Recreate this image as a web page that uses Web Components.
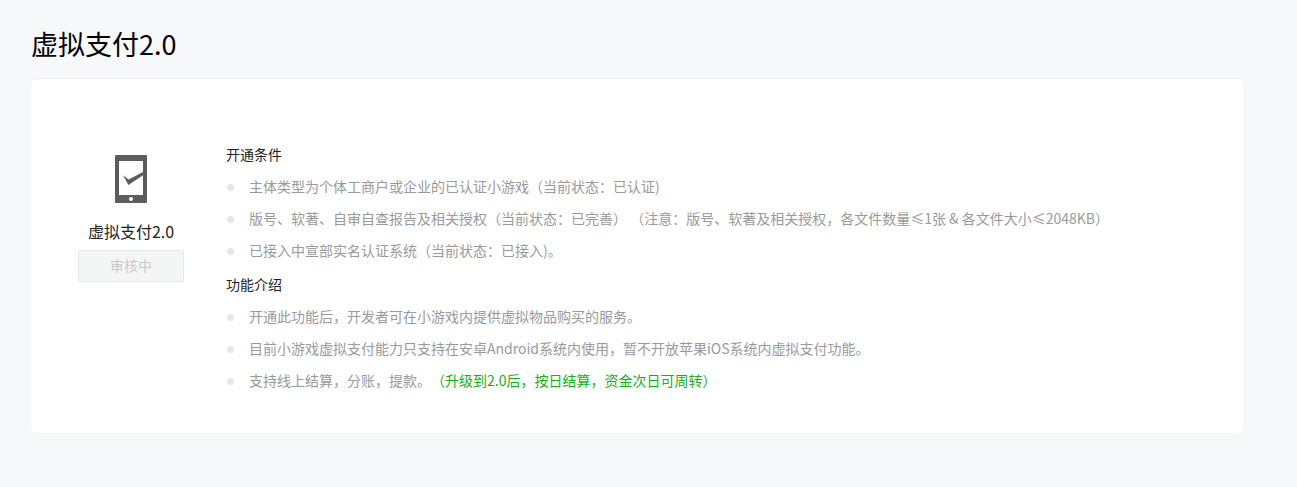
<!DOCTYPE html>
<html lang="zh-CN">
<head>
<meta charset="utf-8">
<title>虚拟支付2.0</title>
<style>
  body {
    margin: 0;
    background: #f6f8fa;
    color: #222;
    font: 14px/22px "Noto Sans CJK SC", sans-serif;
    text-spacing-trim: space-all;
  }
</style>
</head>
<body>

<pay-page heading="虚拟支付2.0">
  <pay-status slot="status" name="虚拟支付2.0" state="审核中"></pay-status>
  <pay-section heading="开通条件">
    <pay-item>主体类型为个体工商户或企业的已认证小游戏（当前状态：已认证)</pay-item>
    <pay-item>版号、软著、自审自查报告及相关授权（当前状态：已完善） （注意：版号、软著及相关授权，各文件数量≤1张 &amp; 各文件大小≤2048KB）</pay-item>
    <pay-item>已接入中宣部实名认证系统（当前状态：已接入)。</pay-item>
  </pay-section>
  <pay-section heading="功能介绍">
    <pay-item>开通此功能后，开发者可在小游戏内提供虚拟物品购买的服务。</pay-item>
    <pay-item>目前小游戏虚拟支付能力只支持在安卓Android系统内使用，暂不开放苹果iOS系统内虚拟支付功能。</pay-item>
    <pay-item>支持线上结算，分账，提款。<span slot="note">（升级到2.0后，按日结算，资金次日可周转）</span></pay-item>
  </pay-section>
</pay-page>

<script>
(function(){

// page title + the white card, status on the left and sections on the right
class PayPage extends HTMLElement {
  constructor() {
    super()
    this.attachShadow({mode:'open'})
    this.shadowRoot.innerHTML = `
      <style>
        :host {
          display: block;
          padding: 24px 54px 54px 31px;
        }

        h1 {
          margin: 0 0 14px;
          color: #000;
          font-size: 27px;
          line-height: 40px;
          font-weight: 400;
        }

        .card {
          display: flex;
          align-items: flex-start;
          gap: 42px;
          padding: 64px 47px 42px;
          background: #fff;
          border-top: 1px solid #eceef0;
          border-radius: 6px;
        }

        .sections {
          flex: 1;
          min-width: 0;
          display: flex;
          flex-direction: column;
          gap: 12px;
        }
      </style>
      <h1></h1>
      <div class="card">
        <slot name="status"></slot>
        <div class="sections"><slot></slot></div>
      </div>
    `
    this.shadowRoot.querySelector('h1').textContent = this.getAttribute('heading')
  }
}

// phone icon, product name and the (disabled) state button
class PayStatus extends HTMLElement {
  constructor() {
    super()
    this.attachShadow({mode:'open'})
    this.shadowRoot.innerHTML = `
      <style>
        :host {
          display: flex;
          flex-direction: column;
          align-items: center;
          flex: none;
          padding-top: 12px;
        }

        svg {
          display: block;
          width: 32px;
          height: 48px;
        }

        .name {
          margin: 16px 0 7px;
          font-size: 16px;
          line-height: 24px;
        }

        button {
          width: 106px;
          height: 32px;
          padding: 0 0 2px;
          border: 1px solid #e4e8eb;
          border-radius: 3px;
          background: #f4f6f6;
          color: #c9c9c9;
          font: inherit;
        }
      </style>
      <svg viewBox="0 0 32 48" aria-hidden="true">
        <rect width="32" height="48" rx="1" fill="#5c5c5c"/>
        <path fill="#fff" d="M4 6h24v34H4z"/>
        <circle cx="16" cy="44" r="2" fill="#fff"/>
        <path fill="#5c5c5c" d="M8 20.2l5.6 4.3L28 17v3.2L13.4 30z"/>
      </svg>
      <div class="name"></div>
      <button type="button" disabled></button>
    `
    this.shadowRoot.querySelector('.name').textContent = this.getAttribute('name')
    this.shadowRoot.querySelector('button').textContent = this.getAttribute('state')
  }
}

class PaySection extends HTMLElement {
  constructor() {
    super()
    this.attachShadow({mode:'open'})
    this.shadowRoot.innerHTML = `
      <style>
        :host { display: block; }

        h2 {
          margin: 0;
          font-size: 14px;
          line-height: 22px;
          font-weight: 400;
        }

        .items {
          display: flex;
          flex-direction: column;
          gap: 10px;
          margin-top: 10px;
        }
      </style>
      <h2></h2>
      <div class="items" role="list"><slot></slot></div>
    `
    this.shadowRoot.querySelector('h2').textContent = this.getAttribute('heading')
  }
}

// one bullet row, the note slot is the green part
class PayItem extends HTMLElement {
  constructor() {
    super()
    this.attachShadow({mode:'open'})
    this.shadowRoot.innerHTML = `
      <style>
        :host {
          display: flex;
          gap: 15px;
          padding-left: 1px;
          color: #9a9a9a;
        }

        .dot {
          flex: none;
          width: 7px;
          height: 7px;
          margin-top: 9px;
          border-radius: 50%;
          background: #e7e7eb;
        }

        ::slotted([slot="note"]) { color: #1aad19; }
      </style>
      <span class="dot"></span>
      <div><slot></slot><slot name="note"></slot></div>
    `
  }

  connectedCallback() {
    this.setAttribute('role', 'listitem')
  }
}

customElements.define('pay-page', PayPage)
customElements.define('pay-status', PayStatus)
customElements.define('pay-section', PaySection)
customElements.define('pay-item', PayItem)

}())
</script>
</body>
</html>
